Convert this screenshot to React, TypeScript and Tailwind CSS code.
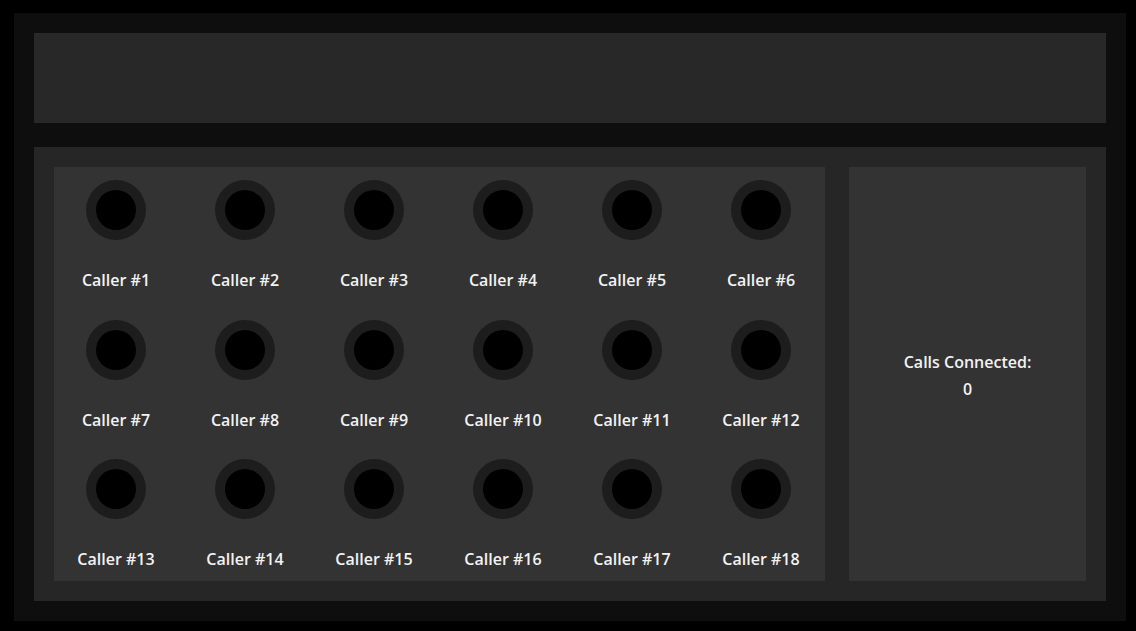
import React from 'react';

const callers = Array.from({ length: 18 }, (_, i) => i + 1);

const CallerSlot: React.FC<{ n: number }> = ({ n }) => (
  <div className="flex flex-col items-center gap-[28px]">
    <div className="w-[60px] h-[60px] rounded-full bg-[#1d1d1d] flex items-center justify-center">
      <div className="w-[40px] h-[40px] rounded-full bg-black" />
    </div>
    <span className="text-base leading-[24px] font-semibold text-[#f2f2f2]">Caller #{n}</span>
  </div>
);

export default function App() {
  return (
    <div className="w-[1136px] h-[631px] bg-black pt-[13px] pl-[14px] pr-[10px] pb-[10px] font-['Open_Sans',sans-serif]">
      <div className="h-full bg-[#0e0e0e] p-[20px] flex flex-col gap-[24px]">
        {/* header strip */}
        <div className="h-[90px] bg-[#282828]" />

        {/* switchboard */}
        <div className="flex-1 bg-[#262626] p-[20px] flex gap-[24px]">
          <div className="w-[771px] bg-[#333333] flex justify-center pt-[13px]">
            <div className="grid grid-cols-[repeat(6,129px)] gap-y-[27.5px] content-start shrink-0 -translate-x-[1px]">
              {callers.map((n) => (
                <CallerSlot key={n} n={n} />
              ))}
            </div>
          </div>

          <div className="flex-1 bg-[#333333] flex flex-col items-center justify-center pt-[4px] text-base font-semibold leading-[27px] text-[#f2f2f2]">
            <span>Calls Connected:</span>
            <span>0</span>
          </div>
        </div>
      </div>
    </div>
  );
}
